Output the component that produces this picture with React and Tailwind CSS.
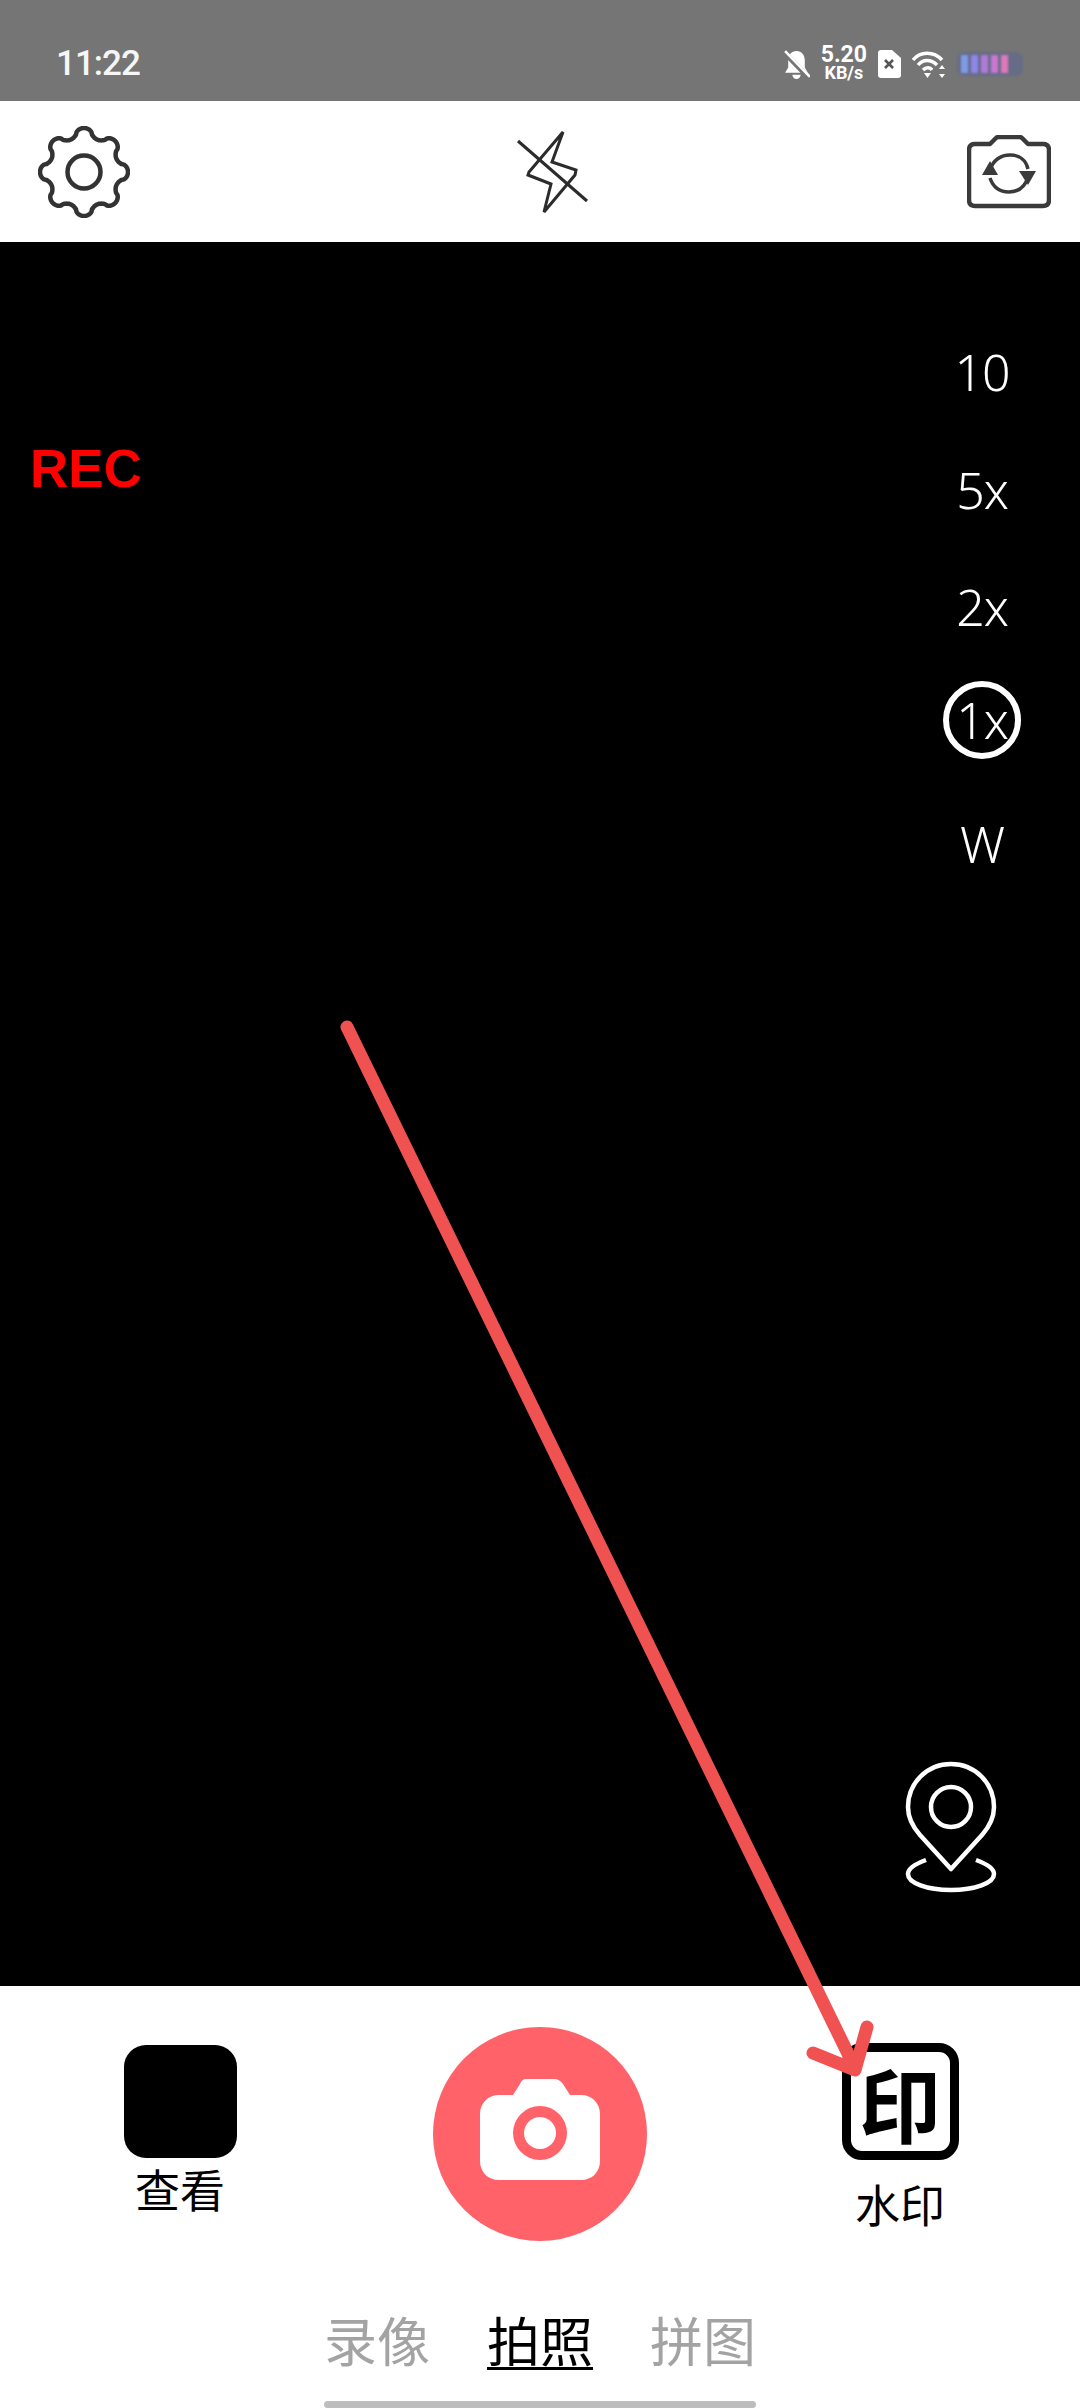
const cjk = 'font-["Noto_Sans_CJK_SC",sans-serif]'

// eight rounded teeth, built as a polar curve
function gearPath() {
  const pts = []
  for (let i = 0; i < 240; i++) {
    const t = (i / 240) * Math.PI * 2
    const c = Math.cos(8 * t)
    const r = 39.5 + 4.5 * Math.sign(c) * Math.pow(Math.abs(c), 0.6)
    pts.push(`${(46 + r * Math.sin(t)).toFixed(2)} ${(46 - r * Math.cos(t)).toFixed(2)}`)
  }
  return 'M' + pts.join('L') + 'Z'
}

function BellOff() {
  return (
    <svg width="27" height="29" viewBox="0 0 26 28">
      <path d="M13 1c5 0 8 4 8 9v7l3 5H2l3-5v-7c0-5 3-9 8-9z" fill="#fff" />
      <path d="M9 24a4 4 0 0 0 8 0z" fill="#fff" />
      <path d="M1 2l24 25" stroke="#757575" strokeWidth="5" />
      <path d="M2 1l24 25" stroke="#fff" strokeWidth="2.5" />
    </svg>
  )
}

function SimOff() {
  return (
    <svg width="23" height="28" viewBox="0 0 23 28">
      <path d="M3 0h11l9 8v17a3 3 0 0 1-3 3H3a3 3 0 0 1-3-3V3a3 3 0 0 1 3-3z" fill="#fff" />
      <path d="M7 10l8 8M15 10l-8 8" stroke="#555" strokeWidth="2.6" />
    </svg>
  )
}

function Wifi() {
  return (
    <svg width="34" height="28" viewBox="0 0 34 28" fill="none" stroke="#fff" strokeWidth="3.4">
      <path d="M1 10C8 1 22 1 30 10" />
      <path d="M6 15c5-6 13-6 19 0" />
      <path d="M11 20c3-3 7-3 9 0" />
      <path d="M15.5 28l-3.5-5h7z" fill="#fff" stroke="none" />
      <path d="M30 15l3 4h-6zM30 28l3-4h-6z" fill="#fff" stroke="none" />
    </svg>
  )
}

function Battery() {
  return (
    <div className="w-[66px] h-[24px] rounded-[7px] bg-[#676c86] flex gap-[3px] pl-[4px] py-[3px] blur-[0.8px]">
      <div className="w-[7px] bg-[#7f9be8]" />
      <div className="w-[7px] bg-[#8f86ea]" />
      <div className="w-[7px] bg-[#b07ad8]" />
      <div className="w-[7px] bg-[#c878d0]" />
      <div className="w-[7px] bg-[#de78bc]" />
    </div>
  )
}

function StatusBar() {
  return (
    <div className="h-[101px] bg-[#757575] flex items-end justify-between pl-[56px] pr-[57px] pb-[19px] text-white font-['Roboto',sans-serif]">
      <span className="text-[35px] leading-[30px] font-medium tracking-[-1px] text-[#f6f6f6] mb-[3px]">11:22</span>
      <div className="flex items-center gap-[11px]">
        <BellOff />
        <div className="flex flex-col items-center font-bold">
          <span className="text-[23px] leading-[18px]">5.20</span>
          <span className="text-[18px] leading-[18px]">KB/s</span>
        </div>
        <SimOff />
        <Wifi />
        <Battery />
      </div>
    </div>
  )
}

function TopBar() {
  return (
    <div className="h-[141px] bg-white flex items-center justify-between pl-[38px] pr-[28px]">
      <svg width="92" height="92" viewBox="0 0 92 92" fill="none" stroke="#333" strokeWidth="4.5">
        <path d={gearPath()} strokeLinejoin="round" />
        <circle cx="46" cy="46" r="16.5" />
      </svg>
      <svg width="74" height="84" viewBox="0 0 74 84" fill="none" stroke="#2b2b2b" strokeWidth="3" className="ml-[9px]">
        <path d="M47 2L36 32l24 8-1 5-31 37 7-28-23-9 1-3z" />
        <path d="M2 11l69 60" />
      </svg>
      <svg width="84" height="74" viewBox="0 0 84 74" fill="none" stroke="#3a3a3a" strokeWidth="4.5" className="mr-[1px]">
        <path d="M8 9h15l6-6c1-1 2-1 3-1h20c1 0 2 0 3 1l6 6h15c4 0 6 2 6 6v50c0 4-2 6-6 6H8c-4 0-6-2-6-6V15c0-4 2-6 6-6z" strokeLinejoin="round" />
        <path d="M23 35c3-10 11-15 20-15 9 0 16 5 18 14" strokeWidth="3.5" />
        <path d="M61 42c-3 10-10 15-19 15-9 0-16-5-19-14" strokeWidth="3.5" />
        <path d="M23 26l-8 14h16z" fill="#3a3a3a" stroke="none" />
        <path d="M61 50l-9-14h17z" fill="#3a3a3a" stroke="none" />
      </svg>
    </div>
  )
}

function ZoomColumn() {
  const rows = [
    { label: '10', cls: 'h-[78px] mb-[40px]' },
    { label: '5x', cls: 'h-[78px] mb-[39px]' },
    { label: '2x', cls: 'h-[78px] mb-[35px]' },
    { label: '1x', cls: 'h-[78px] mb-[46px] border-[6px] border-white rounded-full' },
    { label: 'W', cls: 'h-[78px]' },
  ]
  return (
    <div className="flex flex-col items-center pt-[91px] font-['Noto_Sans',sans-serif] text-white">
      {rows.map(r => (
        <div key={r.label} className={`w-[78px] flex items-center justify-center text-[50px] font-light tracking-[-1px] ${r.cls}`}>
          {r.label}
        </div>
      ))}
    </div>
  )
}

function Viewfinder() {
  return (
    <div className="h-[1744px] bg-black flex justify-between pl-[30px] pr-[59px]">
      <div className="pt-[197px] text-[53px] leading-[60px] font-bold text-[#ff0000] font-['Liberation_Sans',sans-serif]">REC</div>
      <div className="flex flex-col justify-between items-end pb-[92px]">
        <ZoomColumn />
        <svg width="94" height="134" viewBox="0 0 94 134" fill="none" stroke="#fff" strokeWidth="4.5" className="mr-[23px]">
          <path d="M47 109L16 75C8 66 4 57 4 47 4 23 23 4 47 4s43 19 43 43c0 10-4 19-12 28z" strokeLinejoin="round" />
          <circle cx="47" cy="47" r="20" />
          <path d="M22 100C11 104 4 109 4 114c0 9 19 16 43 16s43-7 43-16c0-5-7-10-18-14" />
        </svg>
      </div>
    </div>
  )
}

function BottomPanel() {
  return (
    <div className={`h-[422px] bg-white flex flex-col ${cjk}`}>
      <div className="h-[310px] grid grid-cols-3">
        <div className="flex flex-col items-center pt-[59px]">
          <div className="w-[113px] h-[113px] bg-black rounded-[22px]" />
          <span className="text-[45px] leading-[60px] text-black mt-[1px]">查看</span>
        </div>
        <div className="flex justify-center pt-[41px]">
          <div className="w-[214px] h-[214px] rounded-full bg-[#ff6268] flex items-center justify-center">
            <svg width="122" height="104" viewBox="0 0 122 104" fill="#fff" className="mb-[9px]">
              <path fillRule="evenodd" d="M47 1h28c4 0 7 2 9 5l7 11h11c11 0 19 8 19 19v47c0 11-8 19-19 19H20C9 102 1 94 1 83V36c0-11 8-19 19-19h14l7-11c1-3 3-5 6-5zm14 27a27 27 0 1 0 0 54 27 27 0 0 0 0-54z" />
              <circle cx="61" cy="55" r="16" />
            </svg>
          </div>
        </div>
        <div className="flex flex-col items-center pt-[57px]">
          <div className="w-[117px] h-[117px] border-[9px] border-black rounded-[20px] flex items-center justify-center">
            <span className="text-[82px] leading-[82px] font-bold text-black">印</span>
          </div>
          <span className="text-[45px] leading-[60px] text-black mt-[14px]">水印</span>
        </div>
      </div>
      <div className="flex justify-center gap-[57px] text-[53px] leading-[56px] mt-[18px]">
        <span className="text-[#a3a3a3]">录像</span>
        <span className="text-black border-b-[3px] border-black">拍照</span>
        <span className="text-[#a3a3a3]">拼图</span>
      </div>
      <div className="w-[432px] h-[7px] rounded-full bg-[#bdbdbd] mx-auto mt-[31px]" />
    </div>
  )
}

export default function App() {
  return (
    <div className="relative w-[1080px] h-[2408px] overflow-hidden">
      <StatusBar />
      <TopBar />
      <Viewfinder />
      <BottomPanel />
      {/* hand drawn arrow laid over the screenshot */}
      <svg className="absolute inset-0 pointer-events-none" width="1080" height="2408" viewBox="0 0 1080 2408" fill="none" stroke="#f05252" strokeWidth="13" strokeLinecap="round" strokeLinejoin="round">
        <path d="M347 1027L855 2068" />
        <path d="M813 2053L855 2070 867 2027" />
      </svg>
    </div>
  )
}
